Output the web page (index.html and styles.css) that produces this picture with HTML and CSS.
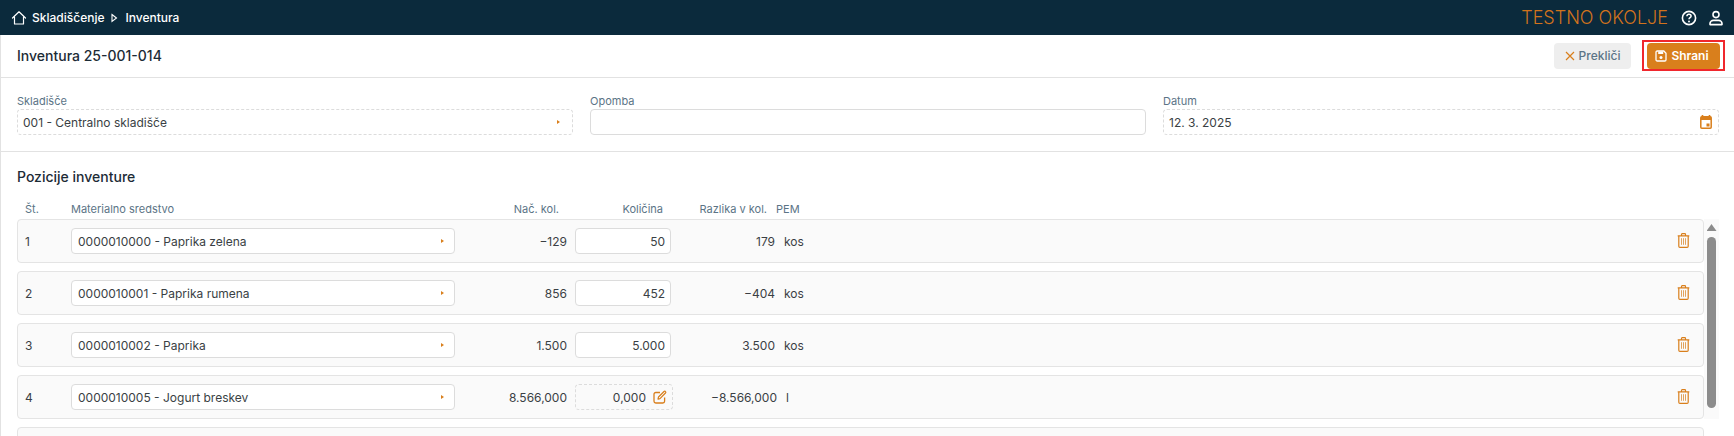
FILE: index.html
```html
<!DOCTYPE html>
<html lang="sl">
<head>
<meta charset="utf-8">
<title>Inventura 25-001-014</title>
<link rel="stylesheet" href="styles.css">
</head>
<body>
<header class="topbar">
  <nav class="crumbs">
    <svg class="home" viewBox="0 0 16 16" width="16" height="16"><path d="M1.5 8 8 1.8 14.5 8M3.5 7v7h9V7" fill="none" stroke="#fff" stroke-width="1.2" stroke-linejoin="round" stroke-linecap="round"/></svg>
    <span>Skladiščenje</span>
    <svg class="crumb-arrow" viewBox="0 0 8 10" width="8" height="10"><path d="M2 1.5 6.5 5 2 8.5Z" fill="none" stroke="#fff" stroke-width="1.1"/></svg>
    <span>Inventura</span>
  </nav>
  <div class="top-right">
    <span class="env">TESTNO OKOLJE</span>
    <svg class="top-icon" viewBox="0 0 16 16" width="16" height="16"><circle cx="8" cy="8" r="6.6" fill="none" stroke="#fff" stroke-width="1.6"/><path d="M5.9 6.3C6 4.9 7 4.3 8 4.3c1.2 0 2.1.8 2.1 1.8 0 1.6-2.1 1.6-2.1 3.2" fill="none" stroke="#fff" stroke-width="1.5"/><circle cx="8" cy="11.5" r=".95" fill="#fff"/></svg>
    <svg class="top-icon user" viewBox="0 0 16 16" width="16" height="16"><circle cx="8" cy="4.6" r="3" fill="none" stroke="#fff" stroke-width="1.6"/><path d="M2 14.6v-1.2c0-1.7 1.6-3 3.4-3h5.2c1.8 0 3.4 1.3 3.4 3v1.2Z" fill="none" stroke="#fff" stroke-width="1.6" stroke-linejoin="round"/></svg>
  </div>
</header>
<main class="main">
  <section class="toolbar">
    <h1 class="title">Inventura 25-001-014</h1>
    <div class="actions">
      <button class="btn btn-cancel"><svg viewBox="0 0 10 10" width="10" height="10"><path d="M1 1l8 8M9 1l-8 8" stroke="#d97f1c" stroke-width="1.2"/></svg>Prekliči</button>
      <div class="save-wrap">
        <button class="btn btn-save"><svg viewBox="0 0 12 12" width="12" height="12"><path d="M1 2.2C1 1.5 1.5 1 2.2 1h6.6L11 3.2v6.6c0 .7-.5 1.2-1.2 1.2H2.2C1.5 11 1 10.500 1 9.800Z" fill="none" stroke="#fff" stroke-width="1.3"/><path d="M3.200 1.500h5v2.500h-5Z" fill="#fff"/><circle cx="6" cy="7.600" r="1.500" fill="#fff"/></svg>Shrani</button>
        <span class="highlight"></span>
      </div>
    </div>
  </section>
  <section class="form">
    <div class="field">
      <label class="label">Skladišče</label>
      <div class="control dashed"><span>001 - Centralno skladišče</span><i class="caret"></i></div>
    </div>
    <div class="field">
      <label class="label">Opomba</label>
      <div class="control"></div>
    </div>
    <div class="field">
      <label class="label">Datum</label>
      <div class="control dashed"><span>12. 3. 2025</span>
        <svg class="cal" viewBox="0 0 12 14" width="12" height="14"><path d="M2.500 0v2M9.500 0v2" stroke="#d97f1c" stroke-width="1.600"/><rect x=".8" y="1.800" width="10.400" height="11.400" rx="1" fill="none" stroke="#d97f1c" stroke-width="1.500"/><rect x="1" y="2" width="10" height="3" fill="#d97f1c"/><rect x="6.500" y="8.500" width="3" height="3" fill="#d97f1c"/></svg>
      </div>
    </div>
  </section>
  <section class="positions">
    <h2 class="subtitle">Pozicije inventure</h2>
    <div class="cols">
      <span class="c-num">Št.</span>
      <span class="c-mat">Materialno sredstvo</span>
      <span class="c-start">Nač. kol.</span>
      <span class="c-qty">Količina</span>
      <span class="c-diff">Razlika v kol.</span>
      <span class="c-unit">PEM</span>
    </div>
    <div class="table-wrap">
      <div class="rows">
        <div class="row">
          <span class="r-num">1</span>
          <div class="r-select"><span>0000010000 - Paprika zelena</span><i class="caret"></i></div>
          <span class="r-start">−129</span>
          <div class="r-input">50</div>
          <span class="r-diff">179</span>
          <span class="r-unit">kos</span>
          <svg class="trash" viewBox="0 0 13 15" width="13" height="15"><use href="#trash"/></svg>
        </div>
        <div class="row">
          <span class="r-num">2</span>
          <div class="r-select"><span>0000010001 - Paprika rumena</span><i class="caret"></i></div>
          <span class="r-start">856</span>
          <div class="r-input">452</div>
          <span class="r-diff">−404</span>
          <span class="r-unit">kos</span>
          <svg class="trash" viewBox="0 0 13 15" width="13" height="15"><use href="#trash"/></svg>
        </div>
        <div class="row">
          <span class="r-num">3</span>
          <div class="r-select"><span>0000010002 - Paprika</span><i class="caret"></i></div>
          <span class="r-start">1.500</span>
          <div class="r-input">5.000</div>
          <span class="r-diff">3.500</span>
          <span class="r-unit">kos</span>
          <svg class="trash" viewBox="0 0 13 15" width="13" height="15"><use href="#trash"/></svg>
        </div>
        <div class="row">
          <span class="r-num">4</span>
          <div class="r-select"><span>0000010005 - Jogurt breskev</span><i class="caret"></i></div>
          <span class="r-start">8.566,000</span>
          <div class="r-input r-empty"><span>0,000</span>
            <svg viewBox="0 0 14 14" width="14" height="14"><path d="M7 2.500H2.800C1.800 2.500 1 3.300 1 4.300v7C1 12.200 1.800 13 2.800 13h7c1 0 1.800-.8 1.800-1.800V7.500" fill="none" stroke="#d97f1c" stroke-width="1.300"/><path d="M5 9.200l.5-2.200L11 1.500c.5-.5 1.100-.5 1.500 0s.5 1 0 1.500L7 8.700Z" fill="none" stroke="#d97f1c" stroke-width="1.200" stroke-linejoin="round"/></svg>
          </div>
          <span class="r-diff">−8.566,000</span>
          <span class="r-unit">l</span>
          <svg class="trash" viewBox="0 0 13 15" width="13" height="15"><use href="#trash"/></svg>
        </div>
        <div class="row"></div>
      </div>
      <div class="scrollbar">
        <i class="scroll-up"></i>
        <i class="scroll-thumb"></i>
      </div>
    </div>
  </section>
</main>
<svg class="defs" width="0" height="0">
  <symbol id="trash" viewBox="0 0 13 15">
    <path d="M4.500 2.300V1.400c0-.4.300-.7.700-.7h2.600c.4 0 .7.300.7.700v.9M.7 2.800h11.600M1.800 2.800v10.400c0 .6.500 1.100 1.100 1.100h7.200c.6 0 1.100-.5 1.100-1.100V2.800" fill="none" stroke="#d97f1c" stroke-width="1.200"/>
    <path d="M4.500 5.200v6.600M6.500 5.200v6.600M8.500 5.200v6.600" stroke="#d97f1c" stroke-width="1" opacity=".7"/>
  </symbol>
</svg>
</body>
</html>
```
FILE: styles.css
```css
* { box-sizing: border-box; }
html, body { margin: 0; height: 436px; overflow: hidden; }
body { font-family: Inter, "Noto Sans", sans-serif; font-size: 12px; color: #3a3f44; background: #fff; }
.defs { position: absolute; }

.topbar { height: 35px; background: #0b2a3c; display: flex; align-items: center; justify-content: space-between; padding: 0 10px 0 11px; color: #fff; }
.crumbs { display: flex; align-items: center; font-size: 12px; font-weight: 500; }
.home { margin-right: 5px; }
.crumb-arrow { margin: 0 7px 0 6px; }
.top-right { display: flex; align-items: center; }
.env { font-size: 18px; font-weight: 300; color: #d2731c; margin-right: 13px; }
.top-icon { display: block; }
.top-icon.user { margin-left: 11px; }

.main { border-left: 1px solid #e2e2e2; height: 401px; overflow: hidden; }

.toolbar { height: 43px; border-bottom: 1px solid #e2e2e2; display: flex; align-items: center; justify-content: space-between; padding: 0 14px 1px 16px; }
.title { margin: 0; font-size: 14px; font-weight: 500; color: #1c2b36; }
.actions { display: flex; align-items: center; gap: 16px; }
.btn { height: 26px; border: 0; border-radius: 4px; font-family: inherit; font-size: 12px; display: flex; align-items: center; justify-content: center; gap: 4px; padding: 0; }
.btn-cancel { width: 77px; background: #eeeeee; color: #5b7486; font-weight: 500; }
.save-wrap { position: relative; display: flex; }
.btn-save { width: 73px; background: #d97f1c; color: #fff; font-weight: 600; padding-right: 3px; }
.highlight { position: absolute; inset: -3px -5px -2px; border: 2px solid #f0272d; }

.form { height: 74px; border-bottom: 1px solid #e2e2e2; display: grid; grid-template-columns: repeat(3, 1fr); gap: 17px; padding: 15px 15px 0 16px; }
.field { display: flex; flex-direction: column; }
.label { font-size: 11px; line-height: 16px; color: #5b7486; }
.control { height: 26px; border: 1px solid #dcdcdc; border-radius: 4px; display: flex; align-items: center; justify-content: space-between; padding: 0 6px 0 5px; color: #3a3f44; }
.control.dashed { border-style: dashed; }
.caret { width: 0; height: 0; border-left: 3px solid #d97f1c; border-top: 2.500px solid transparent; border-bottom: 2.500px solid transparent; }
.control .caret { margin-right: 6px; }

.positions { padding: 15px 0 0 16px; }
.subtitle { margin: 0; font-size: 14px; line-height: 20px; font-weight: 500; color: #1c2b36; }
.cols { height: 32px; display: flex; align-items: center; font-size: 11px; color: #5b7486; padding-top: 12px; width: 1686px; }
.c-num { width: 54px; padding-left: 8px; }
.c-mat { width: 400px; }
.c-start { width: 88px; text-align: right; }
.c-qty { width: 104px; text-align: right; }
.c-diff { width: 104px; text-align: right; }
.c-unit { margin-left: 9px; }

.table-wrap { display: flex; }
.rows { width: 1687px; display: flex; flex-direction: column; gap: 8px; }
.row { height: 44px; flex: none; background: #fafafa; border: 1px solid #e4e4e4; border-radius: 4px; display: flex; align-items: center; padding-right: 13px; }
.r-num { width: 53px; padding-left: 7px; }
.r-select { width: 384px; height: 26px; background: #fff; border: 1px solid #dcdcdc; border-radius: 4px; display: flex; align-items: center; justify-content: space-between; padding: 0 10px 0 6px; }
.r-start { width: 112px; text-align: right; }
.r-input { width: 96px; height: 26px; margin-left: 8px; background: #fff; border: 1px solid #dcdcdc; border-radius: 4px; display: flex; align-items: center; justify-content: flex-end; padding-right: 5px; }
.r-empty { width: 98px; background: transparent; border-style: dashed; gap: 7px; padding-right: 5px; }
.r-diff { width: 104px; text-align: right; }
.r-unit { margin-left: 9px; }
.trash { margin-left: auto; margin-top: -2px; }

.scrollbar { width: 15px; height: 200px; background: #fafafa; display: flex; flex-direction: column; align-items: center; padding: 5px 2px 0 2px; }
.scroll-up { flex: none; width: 10px; height: 7px; background: #8c8c8c; clip-path: polygon(50% 0, 100% 100%, 0 100%); }
.scroll-thumb { width: 9px; height: 171px; margin-top: 6px; background: #8c8c8c; border-radius: 5px; }
```
